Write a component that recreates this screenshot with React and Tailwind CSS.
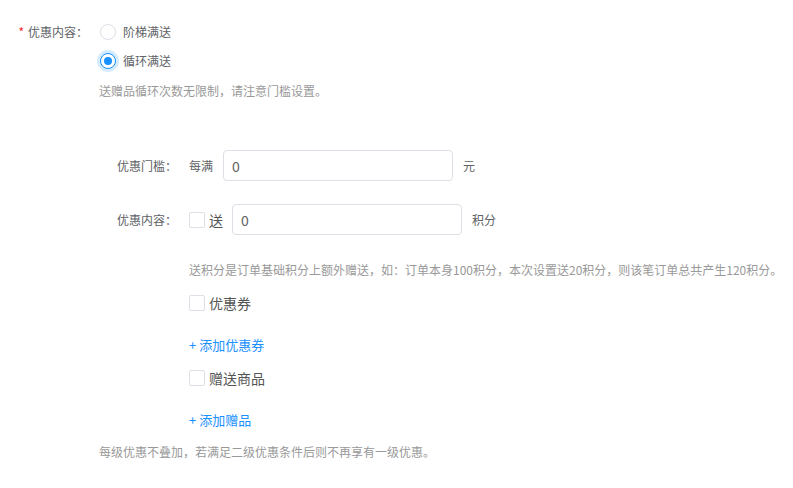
import React from "react";

const Radio = ({ checked, label }) => (
  <label className="flex h-[29px] items-center">
    {checked ? (
      <span className="flex h-4 w-4 items-center justify-center rounded-full border border-[#1890ff] bg-white shadow-[0_0_0_3px_rgba(24,144,255,0.18)]">
        <span className="h-2 w-2 rounded-full bg-[#1890ff]" />
      </span>
    ) : (
      <span className="h-4 w-4 rounded-full border border-[#dcdfe6] bg-white" />
    )}
    <span className="ml-[7px] text-[#606266]">{label}</span>
  </label>
);

const Checkbox = ({ label, className = "" }) => (
  <label className={`flex items-center ${className}`}>
    <span className="h-4 w-4 rounded-[2px] border border-[#dcdfe6] bg-white" />
    <span className="ml-[4px] text-[14px] text-[#555]">{label}</span>
  </label>
);

const Input = ({ value }) => (
  <div className="flex h-[31px] w-[230px] items-center rounded-[4px] border border-[#dcdfe6] bg-white px-[8px] text-[14px] text-[#606266]">
    {value}
  </div>
);

const App = () => {
  return (
    <div
      className="h-[488px] w-[793px] overflow-hidden bg-white text-[12px] leading-5 text-[#606266]"
      style={{ fontFamily: '"Noto Sans CJK SC", "Noto Sans", sans-serif' }}
    >
      {/* 优惠内容 */}
      <div className="flex pt-[17px]">
        <div className="flex h-[29px] w-[88px] items-center justify-end">
          <span className="mr-[4px] text-[#f5222d]">*</span>
          <span>优惠内容：</span>
        </div>
        <div className="ml-[12px] flex flex-col">
          <Radio label="阶梯满送" />
          <Radio checked label="循环满送" />
        </div>
      </div>
      <div className="ml-[99px] mt-[6px] text-[#999]">送赠品循环次数无限制，请注意门槛设置。</div>

      {/* 门槛 */}
      <div className="mt-[49px] flex items-center">
        <div className="w-[177px] text-right">优惠门槛：</div>
        <div className="ml-[12px] flex items-center">
          <span className="mr-[10px]">每满</span>
          <Input value="0" />
          <span className="ml-[10px]">元</span>
        </div>
      </div>

      <div className="mt-[23px] flex items-center">
        <div className="w-[177px] text-right">优惠内容：</div>
        <div className="ml-[12px] flex items-center">
          <Checkbox label="送" />
          <span className="w-[9px]" />
          <Input value="0" />
          <span className="ml-[10px]">积分</span>
        </div>
      </div>

      <div className="ml-[189px] flex flex-col">
        <div className="mt-[25px] whitespace-nowrap text-[#999]">
          送积分是订单基础积分上额外赠送，如：订单本身100积分，本次设置送20积分，则该笔订单总共产生120积分。
        </div>
        <Checkbox className="mt-[13px] h-5" label="优惠券" />
        <div className="mt-[22px] text-[13px] text-[#1890ff]">+ 添加优惠券</div>
        <Checkbox className="mt-[13px] h-5" label="赠送商品" />
        <div className="mt-[22px] text-[13px] text-[#1890ff]">+ 添加赠品</div>
      </div>

      <div className="ml-[99px] mt-[12px] text-[#999]">每级优惠不叠加，若满足二级优惠条件后则不再享有一级优惠。</div>
    </div>
  );
};

export default App;
